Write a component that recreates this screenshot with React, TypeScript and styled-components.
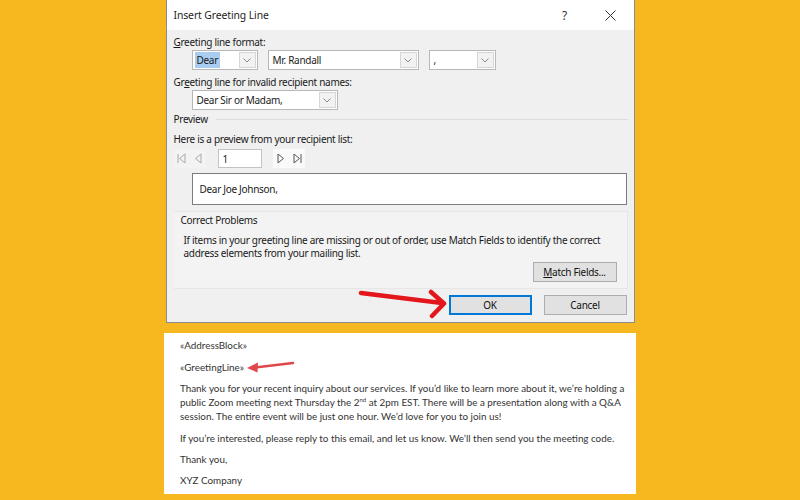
import styled, { createGlobalStyle } from "styled-components";

const GlobalStyle = createGlobalStyle`
  html, body {
    margin: 0;
    padding: 0;
    background: #f7b81f;
  }
`;

const Page = styled.div`
  width: 800px;
  height: 500px;
  background: #f7b81f;
  display: flex;
  flex-direction: column;
  align-items: center;
  overflow: hidden;
`;

const Dialog = styled.div`
  width: 469px;
  box-sizing: border-box;
  border: 1px solid #8c8c8c;
  border-top: none;
  background: #f0f0f0;
  font-family: "Noto Sans", "Segoe UI", sans-serif;
  font-size: 10px;
  letter-spacing: -0.3px;
  color: #1a1a1a;
`;

const TitleBar = styled.div`
  height: 30px;
  background: #fff;
  display: flex;
  align-items: center;
  padding-left: 7px;
`;

const Title = styled.div`
  flex: 1;
  font-size: 10.4px;
  letter-spacing: -0.1px;
  color: #222;
`;

const TitleButton = styled.div`
  width: 46px;
  height: 30px;
  display: flex;
  align-items: center;
  justify-content: center;
  font-size: 12px;
  color: #333;
`;

const Body = styled.div`
  padding: 6px 6px 7px 7px;
  display: flex;
  flex-direction: column;
`;

const Label = styled.div<{ $mt: number }>`
  line-height: 12px;
  margin-top: ${(p) => p.$mt}px;
  u {
    text-decoration: underline;
  }
`;

const ComboRow = styled.div<{ $mt: number }>`
  display: flex;
  gap: 10px;
  padding-left: 18px;
  margin-top: ${(p) => p.$mt}px;
`;

const ComboBox = styled.div<{ $w: number }>`
  width: ${(p) => p.$w}px;
  height: 20px;
  box-sizing: border-box;
  border: 1px solid #b8b8b8;
  background: #fff;
  display: flex;
`;

const ComboValue = styled.div`
  flex: 1;
  display: flex;
  align-items: center;
  padding-left: 2px;
`;

const Selected = styled.span<{ $on: boolean }>`
  padding: 1px 2px;
  background: ${(p) => (p.$on ? "#a9cdf0" : "transparent")};
`;

const ComboArrow = styled.div`
  width: 15px;
  margin: 1px;
  border: 1px solid #d6d6d6;
  background: #f2f2f2;
  display: flex;
  align-items: center;
  justify-content: center;
`;

const SectionHead = styled.div`
  display: flex;
  align-items: center;
  line-height: 12px;
  margin-top: 3px;
  &::after {
    content: "";
    flex: 1;
    margin-left: 8px;
    border-top: 1px solid #dcdcdc;
  }
`;

const NavRow = styled.div`
  display: flex;
  align-items: center;
  height: 19px;
  margin-top: 4px;
`;

const NavGroup = styled.div<{ $faded: boolean }>`
  height: 19px;
  display: flex;
  background: ${(p) => (p.$faded ? "#f7f7f7" : "#fafafa")};
  opacity: ${(p) => (p.$faded ? 0.45 : 1)};
`;

const NavButton = styled.div`
  width: 16px;
  display: flex;
  align-items: center;
  justify-content: center;
`;

const RecordInput = styled.div`
  width: 44px;
  height: 19px;
  box-sizing: border-box;
  border: 1px solid #c4c4c4;
  background: #fff;
  display: flex;
  align-items: center;
  padding-left: 4px;
  margin: 0 11px 0 12px;
`;

const PreviewBox = styled.div`
  margin: 5px 1px 0 18px;
  height: 32px;
  box-sizing: border-box;
  border: 1px solid #7d7d7d;
  background: #fff;
  display: flex;
  align-items: center;
  padding-left: 7px;
`;

const Group = styled.div`
  margin-top: 6px;
  padding: 2px 10px 6px 7px;
  border: 1px solid #e6e6e6;
  border-left: none;
  background: #f3f3f3;
  display: flex;
  flex-direction: column;
`;

const GroupText = styled.div`
  margin-top: 8px;
  padding-left: 3px;
  line-height: 13px;
  white-space: nowrap;
`;

const Button = styled.div<{ $w: number; $primary?: boolean }>`
  width: ${(p) => p.$w}px;
  height: 20px;
  box-sizing: border-box;
  background: #e1e1e1;
  border: 1px solid ${(p) => (p.$primary ? "#0078d7" : "#adadad")};
  box-shadow: ${(p) => (p.$primary ? "inset 0 0 0 1px #0078d7" : "none")};
  display: flex;
  align-items: center;
  justify-content: center;
  color: #111;
`;

const GroupFooter = styled.div`
  display: flex;
  justify-content: flex-end;
  margin-top: 2px;
`;

const Footer = styled.div`
  display: flex;
  justify-content: flex-end;
  align-items: center;
  gap: 12px;
  margin-top: 6px;
  padding-right: 1px;
  height: 20px;
`;

const ArrowWrap = styled.div`
  display: flex;
  align-items: center;
  margin-right: -11px;
`;

const Doc = styled.div`
  width: 472px;
  box-sizing: border-box;
  margin-top: 10px;
  background: #fff;
  padding: 5px 10px 7px 16px;
  font-family: Lato, "Noto Sans", sans-serif;
  font-size: 9.85px;
  color: #333;
`;

const Para = styled.p<{ $mt: number }>`
  margin: ${(p) => p.$mt}px 0 0 0;
  line-height: 14px;
  white-space: nowrap;
  display: flex;
  align-items: center;
`;

const Paragraph = styled.p`
  margin: 7px 0 0 0;
  line-height: 14px;
  white-space: nowrap;
  sup {
    font-size: 6px;
    line-height: 0;
  }
`;

const Chevron = () => (
  <svg width="8" height="5" viewBox="0 0 8 5">
    <polyline points="0.5,0.5 4,4 7.5,0.5" fill="none" stroke="#8a8a8a" strokeWidth="1" />
  </svg>
);

const Combo = ({ w, value, selected = false }: { w: number; value: string; selected?: boolean }) => (
  <ComboBox $w={w}>
    <ComboValue>
      <Selected $on={selected}>{value}</Selected>
    </ComboValue>
    <ComboArrow>
      <Chevron />
    </ComboArrow>
  </ComboBox>
);

const NavIcon = ({ kind }: { kind: "first" | "prev" | "next" | "last" }) => {
  const left = kind === "first" || kind === "prev";
  const bar = kind === "first" || kind === "last";
  return (
    <svg width="10" height="11" viewBox="0 0 10 11">
      {left ? (
        <polygon points="8,1 2.5,5.5 8,10" fill="none" stroke="#555" strokeWidth="1" />
      ) : (
        <polygon points="2,1 7.5,5.5 2,10" fill="none" stroke="#555" strokeWidth="1" />
      )}
      {bar && (left ? <line x1="1" y1="1" x2="1" y2="10" stroke="#555" /> : <line x1="9" y1="1" x2="9" y2="10" stroke="#555" />)}
    </svg>
  );
};

const BigArrow = () => (
  <svg width="90" height="32" viewBox="0 0 90 32" style={{ margin: "-6px 0" }}>
    <g fill="none" stroke="#e3161c" strokeWidth="4.5" strokeLinecap="round" strokeLinejoin="round">
      <line x1="3" y1="4" x2="84" y2="14" />
      <polyline points="73,3 86,14.5 74,27" />
    </g>
  </svg>
);

const SmallArrow = () => (
  <svg width="48" height="12" viewBox="0 0 48 12" style={{ marginLeft: 3 }}>
    <line x1="46" y1="2" x2="8" y2="6.5" stroke="#e0474c" strokeWidth="2.5" strokeLinecap="round" />
    <polygon points="0,7 11,1.5 10.5,11.5" fill="#e0474c" />
  </svg>
);

const CloseIcon = () => (
  <svg width="11" height="11" viewBox="0 0 11 11">
    <path d="M0.5 0.5 L10.5 10.5 M10.5 0.5 L0.5 10.5" stroke="#333" strokeWidth="1" />
  </svg>
);

export default function App() {
  return (
    <Page>
      <GlobalStyle />
      <Dialog>
        <TitleBar>
          <Title>Insert Greeting Line</Title>
          <TitleButton>?</TitleButton>
          <TitleButton>
            <CloseIcon />
          </TitleButton>
        </TitleBar>
        <Body>
          <Label $mt={0}>
            <u>G</u>reeting line format:
          </Label>
          <ComboRow $mt={2}>
            <Combo w={66} value="Dear" selected />
            <Combo w={151} value="Mr. Randall" />
            <Combo w={67} value="," />
          </ComboRow>
          <Label $mt={6}>
            Gr<u>e</u>eting line for invalid recipient names:
          </Label>
          <ComboRow $mt={2}>
            <Combo w={146} value="Dear Sir or Madam," />
          </ComboRow>
          <SectionHead>Preview</SectionHead>
          <Label $mt={8}>Here is a preview from your recipient list:</Label>
          <NavRow>
            <NavGroup $faded>
              <NavButton>
                <NavIcon kind="first" />
              </NavButton>
              <NavButton>
                <NavIcon kind="prev" />
              </NavButton>
            </NavGroup>
            <RecordInput>1</RecordInput>
            <NavGroup $faded={false}>
              <NavButton>
                <NavIcon kind="next" />
              </NavButton>
              <NavButton>
                <NavIcon kind="last" />
              </NavButton>
            </NavGroup>
          </NavRow>
          <PreviewBox>Dear Joe Johnson,</PreviewBox>
          <Group>
            <Label $mt={0}>Correct Problems</Label>
            <GroupText>
              If items in your greeting line are missing or out of order, use Match Fields to identify the correct
              <br />
              address elements from your mailing list.
            </GroupText>
            <GroupFooter>
              <Button $w={84}>
                <u>M</u>atch Fields...
              </Button>
            </GroupFooter>
          </Group>
          <Footer>
            <ArrowWrap>
              <BigArrow />
            </ArrowWrap>
            <Button $w={83} $primary>
              OK
            </Button>
            <Button $w={83}>Cancel</Button>
          </Footer>
        </Body>
      </Dialog>
      <Doc>
        <Para $mt={0}>«AddressBlock»</Para>
        <Para $mt={8}>
          <span>«GreetingLine»</span>
          <SmallArrow />
        </Para>
        <Paragraph>
          Thank you for your recent inquiry about our services. If you’d like to learn more about it, we’re holding a
          <br />
          public Zoom meeting next Thursday the 2<sup>nd</sup> at 2pm EST. There will be a presentation along with a Q&amp;A
          <br />
          session. The entire event will be just one hour. We’d love for you to join us!
        </Paragraph>
        <Para $mt={8}>If you’re interested, please reply to this email, and let us know. We’ll then send you the meeting code.</Para>
        <Para $mt={7}>Thank you,</Para>
        <Para $mt={7}>XYZ Company</Para>
      </Doc>
    </Page>
  );
}
